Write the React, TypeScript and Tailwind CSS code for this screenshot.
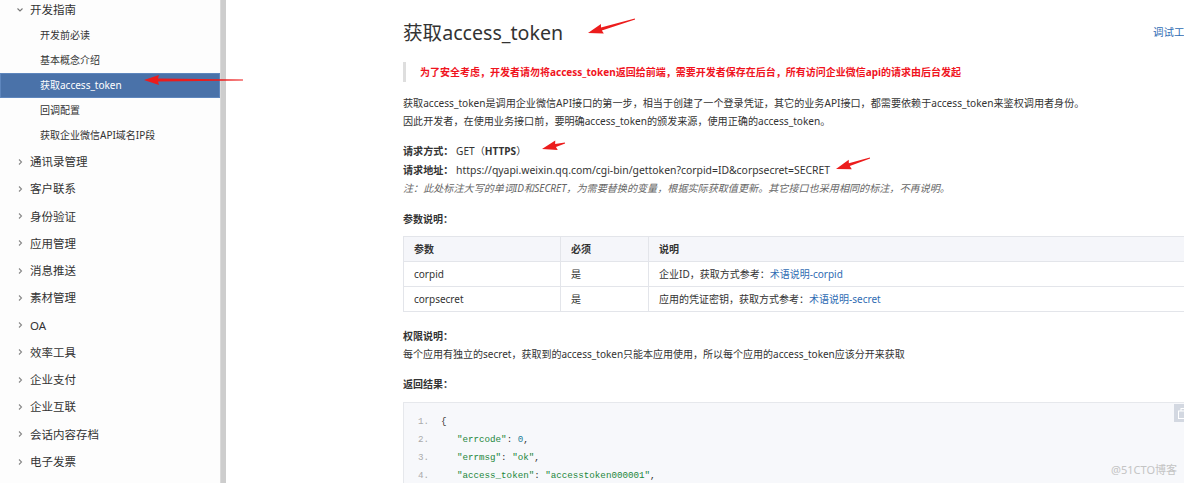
import React from 'react';

const subItems = ['开发前必读', '基本概念介绍', '获取access_token', '回调配置', '获取企业微信API域名IP段'];
const topItems = ['通讯录管理', '客户联系', '身份验证', '应用管理', '消息推送', '素材管理', 'OA', '效率工具', '企业支付', '企业互联', '会话内容存档', '电子发票'];

function Chevron({ down = false }: { down?: boolean }) {
  return (
    <svg width="8" height="8" viewBox="0 0 8 8" className="shrink-0">
      {down ? (
        <path d="M1.5 2.5 L4 5 L6.5 2.5" fill="none" stroke="#777" strokeWidth="1.1" />
      ) : (
        <path d="M3 1.5 L5.5 4 L3 6.5" fill="none" stroke="#888" strokeWidth="1.1" />
      )}
    </svg>
  );
}

// red annotation arrow: tail -> head
function arrowPoints(tx: number, ty: number, hx: number, hy: number) {
  const len = Math.hypot(hx - tx, hy - ty);
  const dx = (hx - tx) / len;
  const dy = (hy - ty) / len;
  const nx = -dy;
  const ny = dx;
  const L = 14;
  const W = 5;
  const bx = hx - dx * L;
  const by = hy - dy * L;
  const pts = [
    [tx + nx * 0.5, ty + ny * 0.5],
    [bx + nx * 1.5, by + ny * 1.5],
    [bx + nx * W - dx * 1, by + ny * W - dy * 1],
    [hx, hy],
    [bx - nx * W - dx * 1, by - ny * W - dy * 1],
    [bx - nx * 1.5, by - ny * 1.5],
    [tx - nx * 0.5, ty - ny * 0.5],
  ];
  return pts.map((p) => p.join(',')).join(' ');
}

const arrows = [
  [243, 80, 144, 80],
  [635, 19, 588, 33],
  [565, 143, 542, 149],
  [870, 158, 836, 169],
];

const codeLines: React.ReactNode[] = [
  <span className="text-[#333]">{'{'}</span>,
  <span className="pl-[16px]">
    <span className="text-[#22863a]">"errcode"</span>
    <span className="text-[#333]">: </span>
    <span className="text-[#1c7d9a]">0</span>
    <span className="text-[#333]">,</span>
  </span>,
  <span className="pl-[16px]">
    <span className="text-[#22863a]">"errmsg"</span>
    <span className="text-[#333]">: </span>
    <span className="text-[#22863a]">"ok"</span>
    <span className="text-[#333]">,</span>
  </span>,
  <span className="pl-[16px]">
    <span className="text-[#22863a]">"access_token"</span>
    <span className="text-[#333]">: </span>
    <span className="text-[#22863a]">"accesstoken000001"</span>
    <span className="text-[#333]">,</span>
  </span>,
];

export default function App() {
  return (
    <div className="relative flex h-[483px] w-full overflow-hidden bg-white font-['Noto_Sans','Noto_Sans_CJK_SC',sans-serif] text-[#333]">
      {/* Sidebar */}
      <aside className="w-[220px] shrink-0 bg-[#fdfdfd]">
        <div className="-mt-[3px] flex flex-col">
          <div className="flex h-[26px] items-center gap-[6px] pl-[16px] text-[11.5px] text-[#333]">
            <Chevron down />
            <span>开发指南</span>
          </div>
          {subItems.map((s) => (
            <div
              key={s}
              className={
                s === '获取access_token'
                  ? 'flex h-[25px] items-center border border-[#5e86bd] bg-[#4a72a9] pl-[39px] text-[10px] text-white'
                  : 'flex h-[25px] items-center pl-[40px] text-[10px] text-[#333]'
              }
            >
              {s}
            </div>
          ))}
          {topItems.map((t) => (
            <div key={t} className="flex h-[27.27px] items-center gap-[6px] pl-[16px] text-[11.5px] text-[#333]">
              <Chevron />
              <span>{t}</span>
            </div>
          ))}
        </div>
      </aside>

      {/* scrollbar strip */}
      <div className="w-[6px] shrink-0 border-l border-[#dadada] bg-[#cdcdcd]" />

      {/* Content */}
      <main className="flex-1 pl-[177px] pt-[20px]">
        <div className="w-[792px]">
          <div className="flex items-center justify-between">
            <h1 className="text-[19.6px] leading-[26px] text-[#333]">获取access_token</h1>
            <a className="text-[10.5px] text-[#2f6cb3]">调试工具</a>
          </div>

          <div className="mt-[16px] flex h-[20px] items-center border-l-[3px] border-[#dedede] pl-[14px] text-[10px] font-bold text-[#f0141e]">
            为了安全考虑，开发者请勿将access_token返回给前端，需要开发者保存在后台，所有访问企业微信api的请求由后台发起
          </div>

          <div className="mt-[12px] text-[10.1px] leading-[18px]">
            <p>获取access_token是调用企业微信API接口的第一步，相当于创建了一个登录凭证，其它的业务API接口，都需要依赖于access_token来鉴权调用者身份。</p>
            <p>因此开发者，在使用业务接口前，要明确access_token的颁发来源，使用正确的access_token。</p>
          </div>

          <div className="mt-[12px] text-[10.1px] leading-[18.5px]">
            <p>
              <span className="font-bold">请求方式：</span> GET（<span className="font-bold">HTTPS</span>）
            </p>
            <p>
              <span className="font-bold">请求地址：</span> <span className="text-[10.4px]">https://qyapi.weixin.qq.com/cgi-bin/gettoken?corpid=ID&amp;corpsecret=SECRET</span>
            </p>
            <p className="italic text-[#666]">注：此处标注大写的单词ID和SECRET，为需要替换的变量，根据实际获取值更新。其它接口也采用相同的标注，不再说明。</p>
          </div>

          <p className="mt-[12.5px] text-[10px] font-bold leading-[18px]">参数说明：</p>

          <table className="mt-[8px] w-full border-collapse text-[10px]">
            <thead>
              <tr className="h-[25px] bg-[#f5f6fa]">
                <th className="w-[157px] border border-[#e3e5ea] pl-[10px] text-left font-bold">参数</th>
                <th className="w-[88px] border border-[#e3e5ea] pl-[10px] text-left font-bold">必须</th>
                <th className="border border-[#e3e5ea] pl-[10px] text-left font-bold">说明</th>
              </tr>
            </thead>
            <tbody>
              <tr className="h-[25px]">
                <td className="border border-[#e3e5ea] pl-[10px]">corpid</td>
                <td className="border border-[#e3e5ea] pl-[10px]">是</td>
                <td className="border border-[#e3e5ea] pl-[10px]">
                  企业ID，获取方式参考：<span className="text-[#2f6cb3]">术语说明-corpid</span>
                </td>
              </tr>
              <tr className="h-[25px]">
                <td className="border border-[#e3e5ea] pl-[10px]">corpsecret</td>
                <td className="border border-[#e3e5ea] pl-[10px]">是</td>
                <td className="border border-[#e3e5ea] pl-[10px]">
                  应用的凭证密钥，获取方式参考：<span className="text-[#2f6cb3]">术语说明-secret</span>
                </td>
              </tr>
            </tbody>
          </table>

          <div className="mt-[15px] text-[10px] leading-[18px]">
            <p className="font-bold">权限说明：</p>
            <p>每个应用有独立的secret，获取到的access_token只能本应用使用，所以每个应用的access_token应该分开来获取</p>
          </div>

          <p className="mt-[12px] text-[10px] font-bold leading-[18px]">返回结果：</p>

          <div className="relative mt-[9px] border border-[#e6e8ec] bg-[#f7f8fb] pt-[10px] font-['Liberation_Mono',monospace] text-[9.2px]">
            {codeLines.map((c, i) => (
              <div key={i} className="flex h-[18px] items-center">
                <span className="w-[37px] pl-[14px] text-[#aaa]">{i + 1}.</span>
                {c}
              </div>
            ))}
            <div className="absolute right-[2px] top-[1px] flex h-[18px] w-[18px] items-center justify-center bg-[#d3d8e1]">
              <svg width="10" height="11" viewBox="0 0 10 11">
                <rect x="3" y="0.5" width="6" height="7.5" fill="none" stroke="#fff" strokeWidth="1" />
                <rect x="0.5" y="3" width="6" height="7.5" fill="#d3d8e1" stroke="#fff" strokeWidth="1" />
              </svg>
            </div>
          </div>
        </div>
      </main>

      {/* watermark */}
      <div className="pointer-events-none absolute bottom-[5px] right-[7px] text-[11px] text-[#c4c4c4]">@51CTO博客</div>

      {/* annotation arrows */}
      <svg className="pointer-events-none absolute left-0 top-0" width="1184" height="483">
        {arrows.map((a, i) => (
          <polygon key={i} points={arrowPoints(a[0], a[1], a[2], a[3])} fill="#ec1c1c" />
        ))}
      </svg>
    </div>
  );
}
